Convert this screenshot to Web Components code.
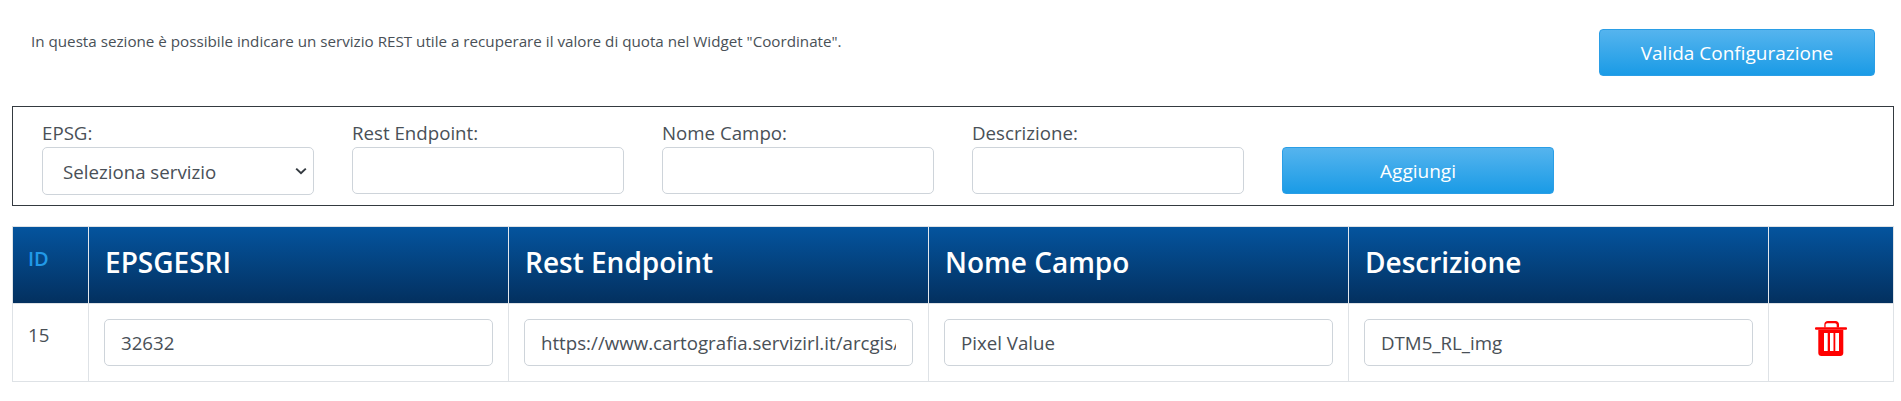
<!DOCTYPE html>
<html lang="it"><head><meta charset="utf-8"><title>Quota</title>
<style>
html,body{margin:0;padding:0;background:#fff}
body{font-family:"Open Sans","Noto Sans",sans-serif;color:#495057;width:1901px;height:401px;overflow:hidden}
</style></head><body>
<quota-panel></quota-panel>
<script>
function def(name,css,html){
  customElements.define(name,class extends HTMLElement{
    constructor(){super();const r=this.attachShadow({mode:'open'});r.innerHTML='<style>'+css+'</style>'+html;}
  });
}
const ff='"Open Sans","Noto Sans",sans-serif';
const ctl=`box-sizing:border-box;height:47px;border:1px solid #ced4da;border-radius:5px;background:#fff;font:18.7px ${ff};color:#495057;outline:none;`;
const lab=`label{font-size:18.7px;line-height:25px;height:25px;color:#495057;white-space:nowrap;margin-top:-2px;display:block;margin-bottom:2px}`;
def('blue-button',`:host{display:block}
button{box-sizing:border-box;width:100%;height:47px;border:1px solid #2a9ee6;border-radius:4px;background:linear-gradient(#55b4ee,#1a9be6);color:#fff;font:19px ${ff};padding:0;cursor:pointer}`,`<button><slot></slot></button>`);
def('select-field',`:host{display:flex;flex-direction:column;width:272px}
${lab}
.sel{${ctl}width:100%;height:48px;padding:0 6px 0 20px;display:flex;align-items:center;justify-content:space-between;white-space:nowrap}
svg{display:block}`,`<label><slot name="label"></slot></label><div class="sel"><slot></slot><svg width="12" height="8" viewBox="0 0 12 8"><path d="M1.2 1.600 6 6.200l4.800-4.600" fill="none" stroke="#343a40" stroke-width="2"/></svg></div>`);
def('text-field',`:host{display:flex;flex-direction:column;width:272px}
${lab}
input{${ctl}width:100%;padding:0 16px}`,`<label><slot></slot></label><input type="text">`);
def('add-form',`:host{display:flex;box-sizing:border-box;margin:30px 7px 0 12px;height:100px;border:1px solid #343a40;padding:15px 0 0 29px;gap:38px}`,`<slot></slot>`);
def('cell-input',`:host{display:block}
input{${ctl}width:100%;padding:0 16px;display:block}`,`<input type="text">`);
def('trash-icon',`:host{display:block;width:32px;height:35px}svg{display:block}`,`<svg width="32" height="35" viewBox="0 0 32 35"><path fill="#f00" fill-rule="evenodd" d="M9.300 6.500V3.500C9.300 1.500 10.800 0 12.800 0h7.700c2 0 3.500 1.500 3.500 3.500v3h-2.300V4c0-1-.7-1.700-1.700-1.700h-7.700c-1 0-1.700.7-1.700 1.700v2.500z"/><rect fill="#f00" x="0" y="6.300" width="32" height="2.400" rx="1"/><path fill="#f00" fill-rule="evenodd" d="M3.300 8.700h25V32c0 1.700-1.300 3-3 3h-19c-1.700 0-3-1.300-3-3zM9 12v18h3.700V12zM15 12v18h3.500V12zM20.300 12v18H24V12z"/></svg>`);
def('data-table',`:host{display:grid;box-sizing:border-box;margin:20px 7px 0 12px;border:1px solid #dee2e6;grid-template-columns:75px 420px 420px 420px 420px 125px;grid-template-rows:76px 78px;}`,`<slot></slot>`);
def('head-cell',`:host{box-sizing:border-box;display:block;padding:17px 16px 0 16px;background:linear-gradient(#04549e,#03305f);color:#fff;font-size:28px;font-weight:600;line-height:36px;border-left:1px solid #e3e8ee;white-space:nowrap}
:host([first]){border-left:none;padding:19px 0 0 15px;font-size:20px;font-weight:600;color:#2199e8;line-height:25px}`,`<slot></slot>`);
def('body-cell',`:host{box-sizing:border-box;display:block;padding:15px 15px 0;border-left:1px solid #dee2e6;border-top:1px solid #dee2e6;font-size:18.7px;line-height:25px;color:#495057}
:host([first]){border-left:none;padding-top:18px}
:host([icon]){display:flex;justify-content:center;padding:17px 0 0 0}`,`<slot></slot>`);
def('intro-bar',`:host{display:flex;justify-content:space-between;box-sizing:border-box;height:76px;padding:29px 26px 0 31px}
p{margin:0;font-size:15.2px;line-height:19px;color:#495057;padding-top:3px;white-space:nowrap}
.r{width:276px}`,`<p><slot></slot></p><div class="r"><slot name="action"></slot></div>`);
def('quota-panel',`:host{display:block}
.b{width:272px;padding-top:25px}`,`
<intro-bar>In questa sezione è possibile indicare un servizio REST utile a recuperare il valore di quota nel Widget "Coordinate".<blue-button slot="action">Valida Configurazione</blue-button></intro-bar>
<add-form>
<select-field><span slot="label">EPSG:</span>Seleziona servizio</select-field>
<text-field>Rest Endpoint:</text-field>
<text-field>Nome Campo:</text-field>
<text-field>Descrizione:</text-field>
<div class="b"><blue-button>Aggiungi</blue-button></div>
</add-form>
<data-table>
<head-cell first>ID</head-cell><head-cell>EPSGESRI</head-cell><head-cell>Rest Endpoint</head-cell><head-cell>Nome Campo</head-cell><head-cell>Descrizione</head-cell><head-cell></head-cell>
<body-cell first>15</body-cell>
<body-cell><cell-input data-v="32632"></cell-input></body-cell>
<body-cell><cell-input data-v="https://www.cartografia.servizirl.it/arcgis/rest/services/DTM5_RL_img/ImageServer/identify"></cell-input></body-cell>
<body-cell><cell-input data-v="Pixel Value"></cell-input></body-cell>
<body-cell><cell-input data-v="DTM5_RL_img"></cell-input></body-cell>
<body-cell icon><trash-icon></trash-icon></body-cell>
</data-table>`);
document.querySelector('quota-panel').shadowRoot.querySelectorAll('cell-input').forEach(c=>{c.shadowRoot.querySelector('input').value=c.dataset.v;});
</script>
</body></html>
